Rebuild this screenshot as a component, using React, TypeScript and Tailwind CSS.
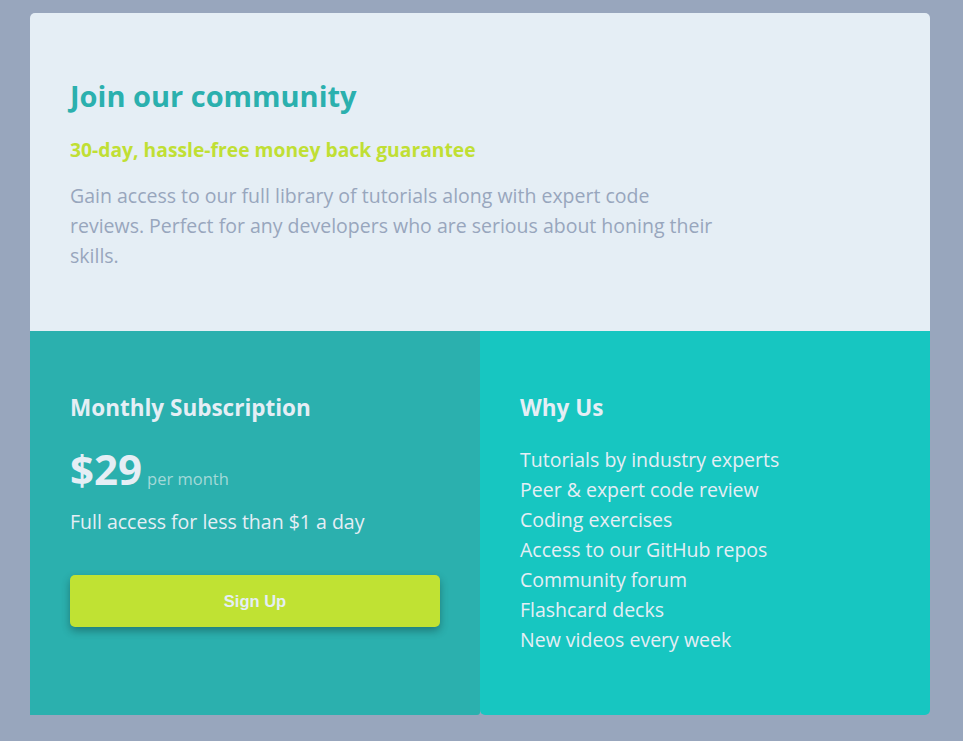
import React from "react";

const features = [
  "Tutorials by industry experts",
  "Peer & expert code review",
  "Coding exercises",
  "Access to our GitHub repos",
  "Community forum",
  "Flashcard decks",
  "New videos every week",
];

export default function App() {
  return (
    <div
      className="min-h-screen w-full bg-[#98a6bd] pt-[13px] pl-[30px]"
      style={{ fontFamily: "'Open Sans', 'Noto Sans', sans-serif" }}
    >
      <div className="w-[900px] flex flex-col">
        <section className="bg-[#e5eef5] rounded-t-[5px] pl-[40px] pt-[65px] pb-[60px]">
          <h1 className="text-[29px] leading-[36px] font-bold text-[#2bb0ae]">
            Join our community
          </h1>
          <p className="mt-[24px] text-[19.3px] leading-[24px] font-bold text-[#c0df34]">
            30-day, hassle-free money back guarantee
          </p>
          <p className="mt-[19px] text-[19.5px] leading-[30px] text-[#98a6bd]">
            Gain access to our full library of tutorials along with expert code
            <br />
            reviews. Perfect for any developers who are serious about honing their
            <br />
            skills.
          </p>
        </section>
        <div className="flex">
          <section className="w-[450px] bg-[#2bb0ae] rounded-br-[3px] pl-[40px] pr-[40px] pt-[63px] pb-[88px] flex flex-col">
            <h2 className="text-[22.5px] leading-[28px] font-bold text-[#e5eef5]">
              Monthly Subscription
            </h2>
            <div className="mt-[23px] flex items-baseline h-[48px]">
              <span className="text-[42px] leading-[48px] font-bold text-[#e5eef5]">$29</span>
              <span className="ml-[5px] text-[16.5px] text-[#a3d9d8]">per month</span>
            </div>
            <p className="mt-[17px] text-[19.5px] leading-[24px] text-[#e5eef5]">
              Full access for less than $1 a day
            </p>
            <button
              className="mt-[41px] h-[52px] w-[370px] rounded-[5px] bg-[#c0e233] text-[#e5eef5] text-[16.5px] font-bold shadow-[0_4px_8px_rgba(0,0,0,0.3)]"
              style={{ fontFamily: "'Liberation Sans', Arial, sans-serif" }}
            >
              Sign Up
            </button>
          </section>
          <section className="w-[450px] bg-[#17c6c1] rounded-b-[5px] pl-[40px] pt-[63px] pb-[40px] flex flex-col">
            <h2 className="text-[22.5px] leading-[28px] font-bold text-[#e5eef5]">Why Us</h2>
            <ul className="mt-[23px] flex flex-col">
              {features.map((f) => (
                <li key={f} className="text-[19.5px] leading-[30px] text-[#e5eef5]">
                  {f}
                </li>
              ))}
            </ul>
          </section>
        </div>
      </div>
    </div>
  );
}
